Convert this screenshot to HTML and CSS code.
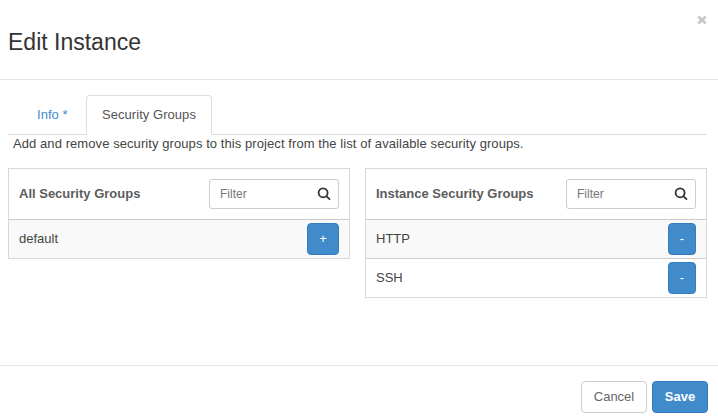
FILE: index.html
```html
<!DOCTYPE html>
<html lang="en">
<head>
<meta charset="utf-8">
<title>Edit Instance</title>
<link rel="stylesheet" href="styles.css">
</head>
<body>
<div class="modal">
  <header class="modal-header">
    <h1 class="title">Edit Instance</h1>
    <button class="close" aria-label="Close"><svg width="10" height="10" viewBox="0 0 10 10"><path d="M1.3 1.5 8.7 8.5M8.7 1.5 1.3 8.5"/></svg></button>
  </header>
  <main class="modal-body">
    <nav class="tabs">
      <a class="tab">Info *</a>
      <a class="tab active">Security Groups</a>
    </nav>
    <p class="help">Add and remove security groups to this project from the list of available security groups.</p>
    <div class="panels">
      <section class="panel">
        <div class="panel-head">
          <h2>All Security Groups</h2>
          <div class="filter"><span>Filter</span><svg width="14" height="14" viewBox="0 0 14 14"><circle cx="6.1" cy="5.8" r="4.5"/><path d="M9.3 9.2 13 12.6"/></svg></div>
        </div>
        <div class="row shaded"><span>default</span><button class="btn primary add">+</button></div>
      </section>
      <section class="panel">
        <div class="panel-head">
          <h2>Instance Security Groups</h2>
          <div class="filter"><span>Filter</span><svg width="14" height="14" viewBox="0 0 14 14"><circle cx="6.1" cy="5.8" r="4.5"/><path d="M9.3 9.2 13 12.6"/></svg></div>
        </div>
        <div class="row shaded"><span>HTTP</span><button class="btn primary remove">-</button></div>
        <div class="row"><span>SSH</span><button class="btn primary remove">-</button></div>
      </section>
    </div>
  </main>
  <footer class="modal-footer">
    <button class="btn cancel">Cancel</button>
    <button class="btn primary save">Save</button>
  </footer>
</div>
</body>
</html>
```
FILE: styles.css
```css
* { box-sizing: border-box; }
body { margin: 0; background: #fff; color: #444; font: 13px/18px "Liberation Sans", Arial, sans-serif; }
.modal { height: 418px; display: flex; flex-direction: column; overflow: hidden; }
.modal-header { height: 80px; border-bottom: 1px solid #e5e5e5; display: flex; justify-content: space-between; padding: 15px 11px 0 8px; }
.title { margin: 11px 0 0; font-size: 23px; line-height: 32px; font-weight: 400; color: #333; }
.close { border: 0; padding: 0; background: none; width: 10px; height: 10px; display: block; }
.close svg { display: block; fill: none; stroke: #c8c8c8; stroke-width: 2.8; }
.modal-body { height: 286px; flex: none; border-bottom: 1px solid #e5e5e5; padding: 15px 11px 0 8px; }
.tabs { display: flex; height: 40px; border-bottom: 1px solid #ddd; }
.tab { width: 78px; height: 40px; padding: 11px 0 0 29px; color: #428bca; white-space: nowrap; letter-spacing: .05px; }
.tab.active { width: 126px; padding: 10px 0 0 15px; border: 1px solid #ddd; border-bottom-color: #fff; border-radius: 4px 4px 0 0; background: #fff; color: #555; }
.help { margin: 0 0 15px; padding-left: 5px; height: 18px; white-space: nowrap; letter-spacing: .077px; }
.panels { display: grid; grid-template-columns: 342px 342px; gap: 15px; align-items: start; }
.panel { border: 1px solid #d8d8d8; }
.panel-head { height: 50px; display: flex; align-items: center; justify-content: space-between; padding: 0 10px; }
.panel-head h2 { margin: 0; font-size: 13px; line-height: 18px; color: #5c5c5c; white-space: nowrap; }
.filter { width: 130px; height: 30px; border: 1px solid #ccc; border-radius: 3px; display: flex; align-items: center; justify-content: space-between; padding: 0 7px 0 10px; color: #777; font-size: 12px; }
.filter svg { fill: none; stroke: #333; stroke-width: 1.8; }
.row { height: 39px; border-top: 1px solid #ccc; display: flex; align-items: center; justify-content: space-between; padding: 0 10px; }
.shaded { background: #f9f9f9; }
.btn { height: 32px; border: 1px solid #ccc; border-radius: 4px; background: #fff; padding: 0; font: 13px/18px "Liberation Sans", Arial, sans-serif; color: #666; }
.primary { background: #428bca; border-color: #357ebd; color: #fff; }
.add { width: 32px; }
.remove { width: 28px; }
.modal-footer { display: flex; justify-content: flex-end; gap: 5px; padding: 15px 10px 0 0; }
.cancel { width: 66px; }
.save { width: 56px; font-weight: 700; }
```
